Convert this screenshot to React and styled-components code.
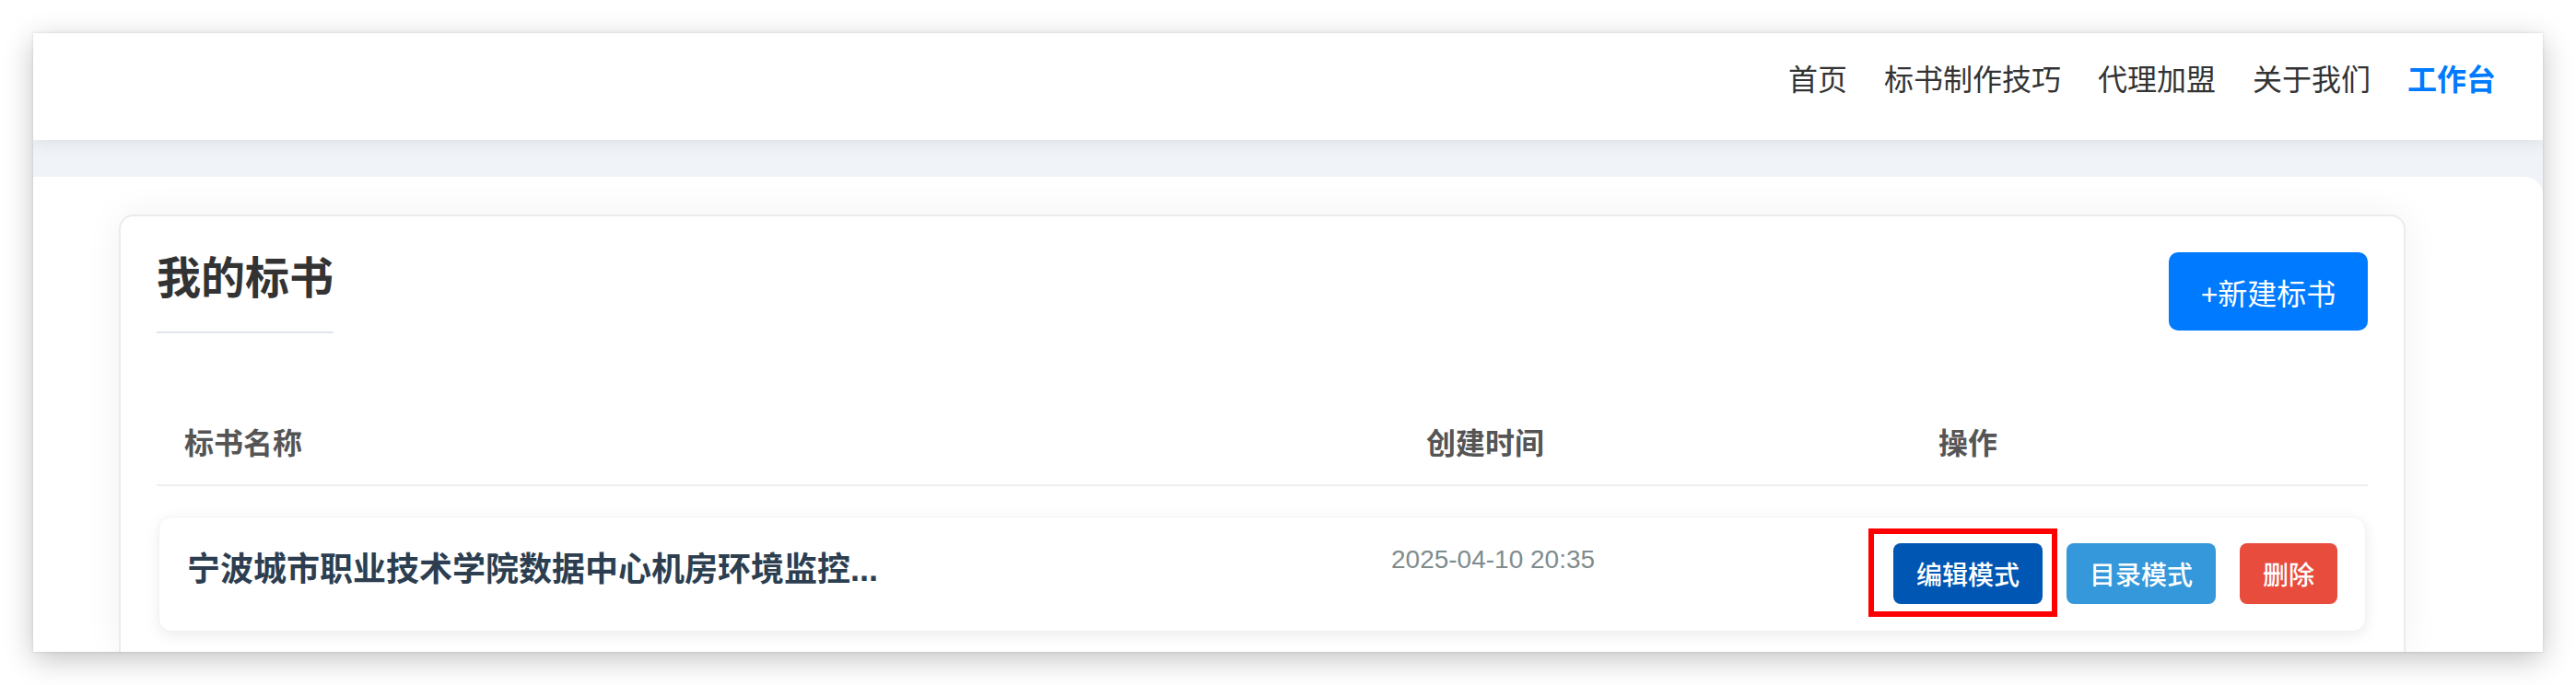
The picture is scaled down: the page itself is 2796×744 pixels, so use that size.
import React from 'react'
import styled, { createGlobalStyle } from 'styled-components'

const GlobalStyle = createGlobalStyle`
  html, body {
    margin: 0;
    padding: 0;
    background: #fff;
  }
  body {
    font-family: "Liberation Sans", "Noto Sans CJK SC", sans-serif;
  }
  * {
    box-sizing: border-box;
  }
`

const navItems = ['首页', '标书制作技巧', '代理加盟', '关于我们', '工作台']

const bids = [
  { name: '宁波城市职业技术学院数据中心机房环境监控...', created: '2025-04-10 20:35' },
]

const App = () => {
  return (
    <Page>
      <GlobalStyle />
      <Window>
        <Header>
          <Nav>
            {navItems.map((item) => (
              <NavLink key={item} $active={item === '工作台'}>{item}</NavLink>
            ))}
          </Nav>
        </Header>

        <Main>
          <Container>
            <Card>
              <CardHead>
                <Title>我的标书</Title>
                <NewButton>+新建标书</NewButton>
              </CardHead>

              <TableHead>
                <HeadCell>标书名称</HeadCell>
                <HeadCell $width={556}>创建时间</HeadCell>
                <HeadCell $width={436}>操作</HeadCell>
              </TableHead>

              {bids.map((bid) => (
                <Row key={bid.name}>
                  <BidName>{bid.name}</BidName>
                  <BidDate>{bid.created}</BidDate>
                  <Actions>
                    <Marked>
                      <ActionButton $variant="edit">编辑模式</ActionButton>
                    </Marked>
                    <ActionButton $variant="outline">目录模式</ActionButton>
                    <ActionButton $variant="danger">删除</ActionButton>
                  </Actions>
                </Row>
              ))}
            </Card>
          </Container>
        </Main>
      </Window>
    </Page>
  )
}

export default App

const buttonColors = {
  edit: '#0056b3',
  outline: '#3498db',
  danger: '#e74c3c',
}

const Page = styled.div`
  width: 2796px;
  height: 744px;
  padding: 36px;
  background: #fff;
  overflow: hidden;
`

const Window = styled.div`
  width: 2724px;
  height: 672px;
  display: flex;
  flex-direction: column;
  overflow: hidden;
  background: #f0f3f7;
  box-shadow: 0 8px 30px rgba(0, 0, 0, 0.24), 0 0 3px rgba(0, 0, 0, 0.12);
`

const Header = styled.header`
  position: relative;
  z-index: 1;
  flex: none;
  height: 116px;
  display: flex;
  justify-content: flex-end;
  align-items: center;
  padding: 0 51px 14px 0;
  background: #fff;
  box-shadow: 0 4px 16px rgba(0, 0, 0, 0.08);
`

const Nav = styled.nav`
  display: flex;
  gap: 40px;
`

const NavLink = styled.a`
  font-size: 32px;
  line-height: 1.5;
  color: ${(p) => (p.$active ? '#007bff' : '#333')};
  font-weight: ${(p) => (p.$active ? 700 : 400)};
  cursor: pointer;
`

const Main = styled.main`
  flex: 1;
  min-height: 0;
  padding-top: 40px;
`

const Container = styled.div`
  height: 100%;
  padding: 41px 149px 0 93px;
  background: #fff;
  border-radius: 0 20px 0 0;
`

const Card = styled.section`
  height: 100%;
  padding: 39px 39px 40px;
  background: #fff;
  border: 2px solid #ebebeb;
  border-bottom: none;
  border-radius: 16px 16px 0 0;
  box-shadow: 0 0 40px rgba(0, 0, 0, 0.06);
`

const CardHead = styled.div`
  display: flex;
  justify-content: space-between;
  align-items: flex-start;
  margin-bottom: 76px;
`

const Title = styled.h2`
  margin: 0;
  padding-bottom: 28px;
  font-size: 48px;
  line-height: 1.2;
  font-weight: 700;
  color: #333;
  border-bottom: 2px solid #e1e5ea;
`

const NewButton = styled.button`
  width: 216px;
  height: 85px;
  display: inline-flex;
  align-items: center;
  justify-content: center;
  padding: 0;
  border: none;
  border-radius: 10px;
  background: #007bff;
  color: #fff;
  font-family: inherit;
  font-size: 32px;
  cursor: pointer;
`

const TableHead = styled.div`
  display: flex;
  padding: 20px 30px;
  border-bottom: 2px solid #efefef;
  font-size: 32px;
  line-height: 1.5;
  font-weight: 600;
  color: #555;
`

const HeadCell = styled.div`
  flex: ${(p) => (p.$width ? `0 0 ${p.$width}px` : '1')};
`

const Row = styled.div`
  height: 125px;
  margin: 33px 2px 0;
  display: flex;
  align-items: center;
  padding: 0 30px;
  background: #fff;
  border: 1px solid #f3f3f3;
  border-radius: 14px;
  box-shadow: 0 4px 16px rgba(0, 0, 0, 0.08);
`

const BidName = styled.div`
  flex: 1;
  align-self: flex-start;
  padding-top: 30px;
  font-size: 36px;
  line-height: 1.5;
  font-weight: 600;
  color: #2c3e50;
  white-space: nowrap;
`

const BidDate = styled.div`
  flex: 0 0 517px;
  align-self: flex-start;
  padding-top: 25px;
  font-size: 28px;
  line-height: 1.5;
  color: #7f8c8d;
`

const Actions = styled.div`
  flex: 0 0 510px;
  display: flex;
  justify-content: flex-end;
  gap: 26px;
`

const Marked = styled.span`
  position: relative;
  display: inline-flex;

  &::after {
    content: '';
    position: absolute;
    top: -16px;
    left: -27px;
    right: -16px;
    bottom: -14px;
    border: 6px solid #ff0000;
    pointer-events: none;
  }
`

const ActionButton = styled.button`
  height: 66px;
  display: inline-flex;
  align-items: center;
  padding: 0 25px;
  border: none;
  border-radius: 8px;
  background: ${(p) => buttonColors[p.$variant]};
  color: #fff;
  font-family: inherit;
  font-size: 28px;
  font-weight: 500;
  cursor: pointer;
`
